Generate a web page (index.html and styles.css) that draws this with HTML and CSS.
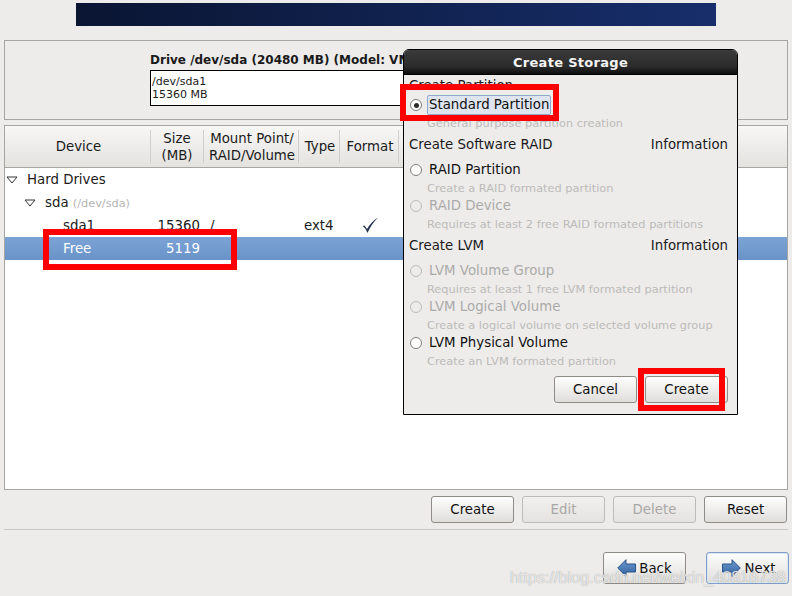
FILE: index.html
```html
<!DOCTYPE html>
<html lang="en">
<head>
    <meta charset="UTF-8">
    <title>Create Storage</title>
    <link rel="stylesheet" href="styles.css">
</head>
<body>

    <div class="banner"></div>

    <!-- drive map -->
    <div class="drive-panel">
        <div class="drive-title">Drive /dev/sda (20480 MB) (Model: VMware, VMware Virtual S)</div>
        <div class="drive-map">
            <div>/dev/sda1</div>
            <div>15360 MB</div>
        </div>
    </div>

    <!-- device tree -->
    <div class="tree-panel">
        <div class="tree-head">
            <div class="col col-device">Device</div>
            <div class="col col-size">Size<br>(MB)</div>
            <div class="col col-mount">Mount Point/<br>RAID/Volume</div>
            <div class="col col-type">Type</div>
            <div class="col col-format">Format</div>
            <div class="col col-rest"></div>
        </div>
        <div class="tree-row row-top">
            <svg class="expander" width="12" height="8" viewBox="0 0 12 8"><path d="M1 1h10L6 7z"/></svg>
            <span>Hard Drives</span>
        </div>
        <div class="tree-row row-disk">
            <svg class="expander" width="12" height="8" viewBox="0 0 12 8"><path d="M1 1h10L6 7z"/></svg>
            <span>sda <small>(/dev/sda)</small></span>
        </div>
        <div class="tree-row row-part">
            <span class="cell-name">sda1</span>
            <span class="cell-size">15360</span>
            <span class="cell-mount">/</span>
            <span class="cell-type">ext4</span>
            <svg class="check" width="18" height="18" viewBox="0 0 18 18"><path d="M1.500 9 3.500 8.500 6 12C9 7 12.500 3.500 17 .500 12.500 5 9 10 6.500 16 5 12.500 3.500 10 1.500 9z"/></svg>
        </div>
        <div class="tree-row row-part selected">
            <span class="cell-name">Free</span>
            <span class="cell-size">5119</span>
        </div>
    </div>

    <div class="tree-actions">
        <button class="btn">Create</button>
        <button class="btn" disabled>Edit</button>
        <button class="btn" disabled>Delete</button>
        <button class="btn">Reset</button>
    </div>

    <div class="rule"></div>

    <div class="nav">
        <button class="btn btn-nav">
            <svg width="19" height="18" viewBox="0 0 19 18"><defs><linearGradient id="arrowBack" x1="0" y1="0" x2="0" y2="1"><stop offset="0" stop-color="#6f9bd0"/><stop offset="1" stop-color="#2f5f9f"/></linearGradient></defs><path d="M.7 9 9 .7v4.300h9.500v8H9v4.300z" fill="url(#arrowBack)" stroke="#2a5288"/></svg>
            Back
        </button>
        <button class="btn btn-nav btn-default">
            <svg width="19" height="18" viewBox="0 0 19 18"><defs><linearGradient id="arrowNext" x1="0" y1="0" x2="0" y2="1"><stop offset="0" stop-color="#6f9bd0"/><stop offset="1" stop-color="#2f5f9f"/></linearGradient></defs><path d="M18.300 9 10 .7v4.300H.5v8H10v4.300z" fill="url(#arrowNext)" stroke="#2a5288"/></svg>
            Next
        </button>
    </div>

    <!-- modal -->
    <div class="dialog">
        <div class="dialog-title">Create Storage</div>
        <div class="dialog-body">
            <div class="section first"><span>Create Partition</span></div>
            <div class="option option-first">
                <span class="radio checked"></span>
                <span class="option-label focused">Standard Partition</span>
            </div>
            <div class="hint">General purpose partition creation</div>

            <div class="section"><span>Create Software RAID</span><span>Information</span></div>
            <div class="option">
                <span class="radio"></span>
                <span class="option-label">RAID Partition</span>
            </div>
            <div class="hint">Create a RAID formated partition</div>
            <div class="option off">
                <span class="radio"></span>
                <span class="option-label">RAID Device</span>
            </div>
            <div class="hint">Requires at least 2 free RAID formated partitions</div>

            <div class="section"><span>Create LVM</span><span>Information</span></div>
            <div class="option off">
                <span class="radio"></span>
                <span class="option-label">LVM Volume Group</span>
            </div>
            <div class="hint">Requires at least 1 free LVM formated partition</div>
            <div class="option off">
                <span class="radio"></span>
                <span class="option-label">LVM Logical Volume</span>
            </div>
            <div class="hint">Create a logical volume on selected volume group</div>
            <div class="option">
                <span class="radio"></span>
                <span class="option-label">LVM Physical Volume</span>
            </div>
            <div class="hint">Create an LVM formated partition</div>

            <div class="dialog-actions">
                <button class="btn">Cancel</button>
                <button class="btn">Create</button>
            </div>
        </div>
    </div>

    <!-- annotation boxes -->
    <div class="mark mark-option"></div>
    <div class="mark mark-free"></div>
    <div class="mark mark-create"></div>

    <div class="watermark">https://blog.csdn.net/weixin_40816738</div>

</body>
</html>
```

FILE: styles.css
```css
html, body {
    margin: 0;
    height: 596px;
    overflow: hidden;
}
body {
    position: relative;
    background: #edeceb;
    color: #1a1a1a;
    font-family: "DejaVu Sans", sans-serif;
    font-size: 13.33px;
}
.banner {
    width: 640px;
    height: 23px;
    margin: 3px 0 0 76px;
    background: linear-gradient(90deg, #0a1532, #172e6b);
}
.drive-panel {
    box-sizing: border-box;
    height: 80px;
    margin: 14px 4px 0;
    padding: 11px 0 0 145px;
    border: 1px solid #a8a6a2;
    overflow: hidden;
}
.drive-title {
    font-size: 12px;
    font-weight: bold;
    line-height: 16px;
    white-space: nowrap;
}
.drive-map {
    box-sizing: border-box;
    width: 560px;
    height: 36px;
    margin-top: 2px;
    padding: 4px 1px;
    border: 1px solid #000;
    background: #fff;
    font-size: 11px;
    line-height: 13px;
}
.tree-panel {
    box-sizing: border-box;
    height: 365px;
    margin: 5px 4px 0;
    border: 1px solid #a8a6a2;
    background: #fff;
}
.tree-head {
    display: flex;
    height: 41px;
    padding: 0;
    border-bottom: 1px solid #a8a6a2;
    background: linear-gradient(#f7f7f6, #e4e2df);
    text-align: center;
    line-height: 17px;
}
.col {
    box-sizing: border-box;
    display: flex;
    align-items: center;
    justify-content: center;
    margin: 4px 0;
    padding-left: 2px;
    border-right: 1px solid #cfcdc9;
    white-space: nowrap;
}
.col-device { width: 146px; }
.col-size { width: 53px; padding-left: 0; }
.col-mount { width: 95px; }
.col-type { width: 41px; }
.col-format { width: 59px; }
.col-rest { flex: 1; border-right: 0; }
.tree-row {
    display: flex;
    align-items: center;
    height: 23px;
}
.row-top { padding-left: 1px; }
.row-top span { margin-left: 9px; }
.row-disk { padding-left: 19px; }
.row-disk span { margin-left: 9px; }
.row-disk small {
    color: #b5b5b5;
    font-size: 11.3px;
}
.expander {
    fill: none;
    stroke: #333;
}
.cell-name { margin-left: 58px; width: 87px; }
.cell-size { width: 50px; text-align: right; }
.cell-mount { margin-left: 10px; width: 94px; }
.cell-type { width: 57px; }
.check { fill: #24314e; }
.selected {
    color: #fff;
    background: linear-gradient(#7ca3d6, #6993c8);
}
.tree-actions {
    display: flex;
    justify-content: flex-end;
    gap: 8px;
    margin: 6px 5px 0 4px;
}
.btn {
    box-sizing: border-box;
    width: 83px;
    height: 27px;
    padding: 0;
    border: 1px solid #8f8c87;
    border-radius: 3px;
    background: linear-gradient(#fdfdfd, #dfdedb);
    color: #111;
    font-family: inherit;
    font-size: 13.33px;
}
.btn:disabled {
    border-color: #bdbbb7;
    background: linear-gradient(#f1f0ef, #e4e3e1);
    color: #a9a8a6;
}
.rule {
    height: 1px;
    margin: 6px 4px 0;
    background: #c8c6c2;
}
.nav {
    display: flex;
    justify-content: flex-end;
    gap: 20px;
    margin: 22px 3px 0 4px;
}
.btn-nav {
    display: flex;
    align-items: center;
    justify-content: center;
    gap: 3px;
    height: 32px;
}
.btn-default {
    padding-left: 3px;
    border-color: #7e9fc9;
    box-shadow: inset 0 0 0 1px #dbe6f3;
}
.dialog {
    position: absolute;
    left: 403px;
    top: 49px;
    box-sizing: border-box;
    width: 335px;
    height: 366px;
    border: 1px solid #000;
    border-radius: 6px 6px 0 0;
    background: #edeceb;
    overflow: hidden;
}
.dialog-title {
    box-sizing: border-box;
    height: 25px;
    border-bottom: 1px solid #000;
    background: linear-gradient(#3a3a3a 0, #2b2b2b 70%, #0d0d0d 100%);
    color: #f4f4f4;
    font-size: 13px;
    font-weight: bold;
    line-height: 25px;
    text-align: center;
    letter-spacing: 0.3px;
}
.dialog-body {
    padding: 0 9px 0 5px;
}
.section {
    display: flex;
    justify-content: space-between;
    align-items: center;
    height: 24px;
    margin-top: 1px;
}
.section.first {
    height: 20px;
    margin-top: 0;
}
.option {
    display: flex;
    align-items: center;
    height: 19px;
    color: #111;
}
.section + .option {
    margin-top: 4px;
}
.section.first + .option {
    margin-top: 0;
}
.radio {
    box-sizing: border-box;
    width: 12px;
    height: 12px;
    margin: 1px 7px 0 1px;
    display: flex;
    align-items: center;
    justify-content: center;
    border: 1px solid #7f7d79;
    border-radius: 50%;
    background: #fff;
}
.radio.checked::after {
    content: "";
    width: 5px;
    height: 5px;
    border-radius: 50%;
    background: #2b2b2b;
}
.off {
    color: #ababa9;
}
.off .radio {
    border-color: #bcbab6;
    background: #edeceb;
}
.option-label {
    white-space: nowrap;
}
.focused {
    margin-left: -2px;
    padding: 0 1px;
    border: 1px solid #8ea8cb;
    border-radius: 2px;
    background: #dfe5ee;
    line-height: 18px;
}
.hint {
    height: 17px;
    padding-left: 18px;
    color: #bcbbb9;
    font-size: 11.35px;
    line-height: 19px;
    white-space: nowrap;
}
.dialog-actions {
    display: flex;
    justify-content: flex-end;
    gap: 8px;
    margin: 7px 0 0;
}
.mark {
    position: absolute;
    box-sizing: border-box;
    border: 6px solid #f00;
}
.mark-option {
    left: 400px;
    top: 84px;
    width: 159px;
    height: 37px;
}
.mark-free {
    left: 43px;
    top: 229px;
    width: 194px;
    height: 41px;
}
.mark-create {
    left: 638px;
    top: 368px;
    width: 87px;
    height: 43px;
}
.watermark {
    position: absolute;
    left: 510px;
    top: 567px;
    color: rgba(255, 255, 255, 0.75);
    font-family: "Liberation Sans", sans-serif;
    font-size: 16.2px;
    line-height: 20px;
    white-space: nowrap;
    text-shadow: 0 0 1px rgba(120, 120, 120, 0.8);
}
```
